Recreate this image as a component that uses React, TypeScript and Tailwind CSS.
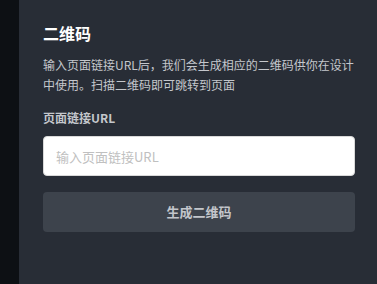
export default function App() {
  return (
    <div
      className="flex h-[284px] w-[377px] overflow-hidden bg-[#282d36]"
      style={{ fontFamily: '"Noto Sans CJK SC", "Liberation Sans", sans-serif' }}
    >
      <div className="w-[19px] shrink-0 bg-[#0d1014]" />
      <div className="flex w-[336px] flex-col pl-6 pt-[21px]">
        <h1 className="text-[16px] font-bold leading-[24px] text-white">二维码</h1>
        <p className="mt-[10px] text-[12px] leading-[20px] text-[#c4c7cc]">
          输入页面链接URL后，我们会生成相应的二维码供你在设计中使用。扫描二维码即可跳转到页面
        </p>
        <label className="mt-[14px] text-[12px] font-bold leading-[18px] text-[#c4c7cc]">页面链接URL</label>
        <input
          className="mt-[9px] h-[40px] w-full rounded-[4px] border border-[#d9d9d9] bg-white px-3 text-[13px] text-[#333] outline-none placeholder:text-[#c0c0c0]"
          placeholder="输入页面链接URL"
        />
        <button className="mt-[16px] h-[40px] w-full rounded-[4px] bg-[#3d434c] text-[13px] font-bold text-[#c3c6cb]">
          生成二维码
        </button>
      </div>
    </div>
  );
}
